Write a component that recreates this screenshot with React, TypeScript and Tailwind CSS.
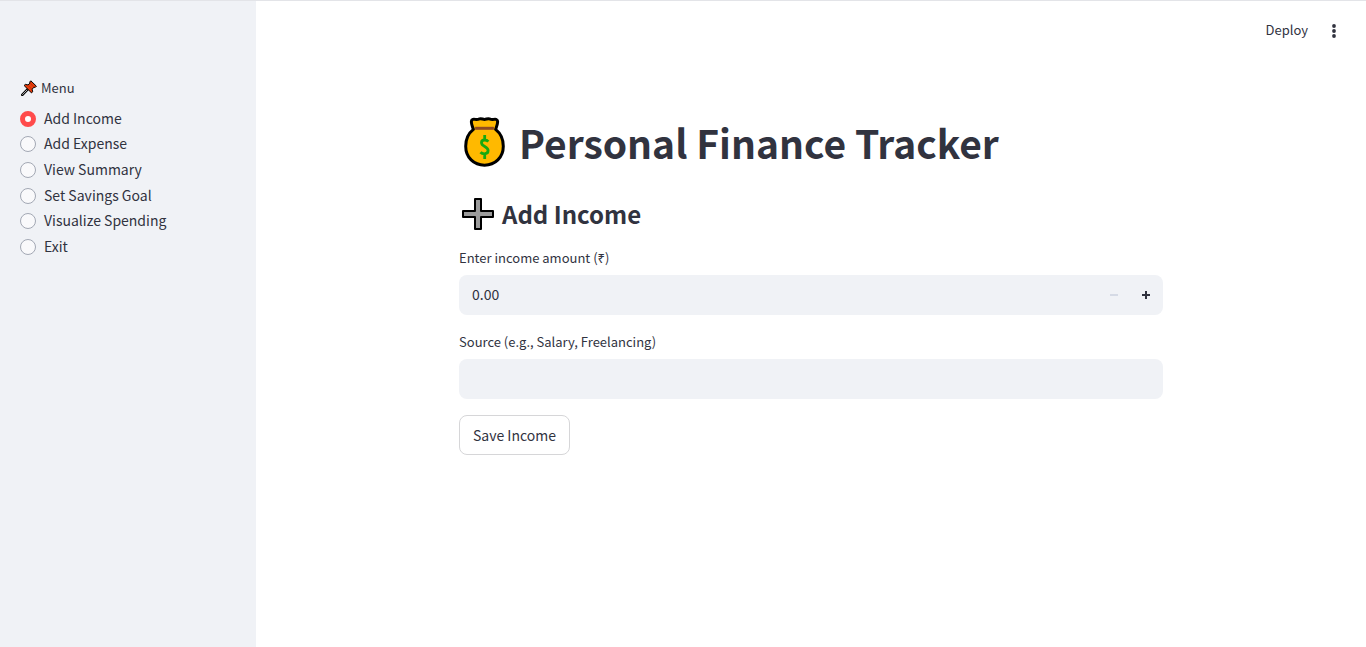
import { useId, useState } from "react";

const menuItems = [
  "Add Income",
  "Add Expense",
  "View Summary",
  "Set Savings Goal",
  "Visualize Spending",
  "Exit",
];

function PushpinIcon() {
  return (
    <svg viewBox="0 0 16 16" className="size-4" aria-hidden="true">
      <path d="M1.3 14.8 6.6 9.4" stroke="#000" strokeWidth="2.6" strokeLinecap="round" />
      <path d="M1.6 14.5 6 10" stroke="#b0b0b0" strokeWidth="1" strokeLinecap="round" />
      <path
        d="M9.8 0.8 15.4 6.2 14.2 7.4 12.9 7.2 11.2 9.2 11.6 11.8 10.5 12.9 3.1 5.5 4.3 4.4 7 4.9 9 3.2 8.7 2Z"
        fill="#e83c0b"
        stroke="#000"
        strokeWidth="1"
        strokeLinejoin="round"
      />
      <path d="M9.4 3.4 12.7 6.8M7 5.3 10.8 9.1" stroke="#a52a08" strokeWidth="0.6" />
    </svg>
  );
}

function MoneyBagIcon() {
  return (
    <svg viewBox="-0.5 0 42 52" className="h-[52px] w-[42px]" aria-hidden="true">
      <path
        d="M9.9 13.4C8.8 10.3 7.6 7.2 7.9 5.2 8.2 3.1 10.1 2.9 12 3.4 13.5 3.8 14.5 3.5 16 2.9 17.8 2.3 19.3 3.4 21 3.4 22.7 3.4 24.2 2.3 26 2.9 27.5 3.5 28.5 3.8 30 3.4 31.9 2.9 33.8 3.1 34.1 5.2 34.4 7.2 33.2 10.3 32.1 13.4 36.9 17.2 39.8 22.8 39.8 30.2 39.8 41.5 31.6 49.2 21 49.2S2.2 41.5 2.2 30.2C2.2 22.8 5.1 17.2 9.9 13.4Z"
        fill="#ffb900"
        stroke="#000"
        strokeWidth="3"
        strokeLinejoin="round"
      />
      <path d="M11.6 10.8H30.4V13.8H11.6Z" fill="#8f4b23" />
      <path
        d="M24.8 25.6C24 24.6 22.8 24 21.2 24 19.2 24 18 25 18 26.8 18 30.8 24.6 30.4 24.6 34.6 24.6 36.6 23.2 37.8 20.9 37.8 19.2 37.8 17.9 37.2 17 36.2M21.2 19V24M21.2 37.8V43"
        fill="none"
        stroke="#16a910"
        strokeWidth="2.8"
      />
    </svg>
  );
}

function HeavyPlusIcon() {
  return (
    <svg viewBox="0 0 32 32" className="size-8" aria-hidden="true">
      <path
        d="M13 1H19V13H31V19H19V31H13V19H1V13H13Z"
        fill="#9b9b9b"
        stroke="#000"
        strokeWidth="2"
        strokeLinejoin="round"
      />
    </svg>
  );
}

function Sidebar({ selected, onSelect }: { selected: string; onSelect: (item: string) => void }) {
  return (
    <aside className="w-64 shrink-0 bg-[#f0f2f6] px-5 pt-[75px]">
      <fieldset>
        <legend className="flex h-6 items-center gap-1 pl-px text-[13px]">
          <PushpinIcon />
          Menu
        </legend>
        <div className="mt-1.5 grid h-[154px] grid-rows-6">
          {menuItems.map((item) => (
            <label key={item} className="flex cursor-pointer items-center gap-2 text-[14px] leading-5">
              <input
                type="radio"
                name="menu"
                checked={selected === item}
                onChange={() => onSelect(item)}
                className="size-4 shrink-0 appearance-none rounded-full border border-[#a3a8b4] bg-[#f9f9fb] checked:border-[5px] checked:border-[#ff4b4b] checked:bg-white"
              />
              <span className="pb-0.5">{item}</span>
            </label>
          ))}
        </div>
      </fieldset>
    </aside>
  );
}

export default function App() {
  const [selected, setSelected] = useState("Add Income");
  const [amount, setAmount] = useState("0.00");
  const [source, setSource] = useState("");
  const amountId = useId();
  const sourceId = useId();
  const value = Number(amount) || 0;

  return (
    <div className="flex min-h-screen border-t border-[#e3e4e8] bg-white font-['Noto_Sans_CJK_SC','Noto_Sans',sans-serif] text-[#31333f]">
      <Sidebar selected={selected} onSelect={setSelected} />
      <div className="flex min-w-0 grow flex-col">
        <header className="flex h-[60px] items-center justify-end gap-2.5 pr-5">
          <button type="button" className="cursor-pointer px-1 pb-0.5 text-[13px]">
            Deploy
          </button>
          <button type="button" aria-label="Main menu" className="flex size-6 cursor-pointer items-center justify-center">
            <svg viewBox="0 0 4 14" className="h-3.5 w-1" fill="currentColor" aria-hidden="true">
              <circle cx="2" cy="2" r="1.9" />
              <circle cx="2" cy="7" r="1.9" />
              <circle cx="2" cy="12" r="1.9" />
            </svg>
          </button>
        </header>
        <main className="mx-auto w-full max-w-[704px] pt-[55px]">
          <h1 className="flex h-[52px] items-center gap-3.5 pl-1 text-[39px] leading-[52px] font-bold">
            <MoneyBagIcon />
            Personal Finance Tracker
          </h1>
          <h2 className="mt-7 flex h-9 items-center gap-2 pl-[3px] text-[24px] leading-9 font-semibold">
            <HeavyPlusIcon />
            Add Income
          </h2>
          <form onSubmit={(event) => event.preventDefault()}>
            <label htmlFor={amountId} className="mt-3.5 block text-[13px] leading-6">
              Enter income amount (₹)
            </label>
            <div className="mt-[5px] flex h-10 overflow-hidden rounded-lg bg-[#f0f2f6] pr-px">
              <input
                id={amountId}
                type="text"
                inputMode="decimal"
                value={amount}
                onChange={(event) => setAmount(event.target.value)}
                className="min-w-0 grow bg-transparent px-[13px] pb-0.5 text-[14px] outline-none"
              />
              <button
                type="button"
                aria-label="Decrease"
                disabled={value <= 0}
                onClick={() => setAmount(Math.max(0, value - 0.01).toFixed(2))}
                className="flex w-8 items-center justify-center disabled:text-[#d5dae5]"
              >
                <svg viewBox="0 0 8 8" className="size-2" fill="currentColor" aria-hidden="true">
                  <path d="M0 3H8V5H0Z" />
                </svg>
              </button>
              <button
                type="button"
                aria-label="Increase"
                onClick={() => setAmount((value + 0.01).toFixed(2))}
                className="flex w-8 items-center justify-center"
              >
                <svg viewBox="0 0 8 8" className="size-2" fill="currentColor" aria-hidden="true">
                  <path d="M3 0H5V3H8V5H5V8H3V5H0V3H3Z" />
                </svg>
              </button>
            </div>
            <label htmlFor={sourceId} className="mt-[15px] block text-[13px] leading-6">
              Source (e.g., Salary, Freelancing)
            </label>
            <input
              id={sourceId}
              type="text"
              value={source}
              onChange={(event) => setSource(event.target.value)}
              className="mt-[5px] block h-10 w-full rounded-lg bg-[#f0f2f6] px-[13px] pb-0.5 text-[14px] outline-none"
            />
            <button
              type="submit"
              className="mt-4 h-10 cursor-pointer rounded-lg border border-[#d6d6d8] bg-white px-[13px] text-[14px]"
            >
              Save Income
            </button>
          </form>
        </main>
      </div>
    </div>
  );
}
